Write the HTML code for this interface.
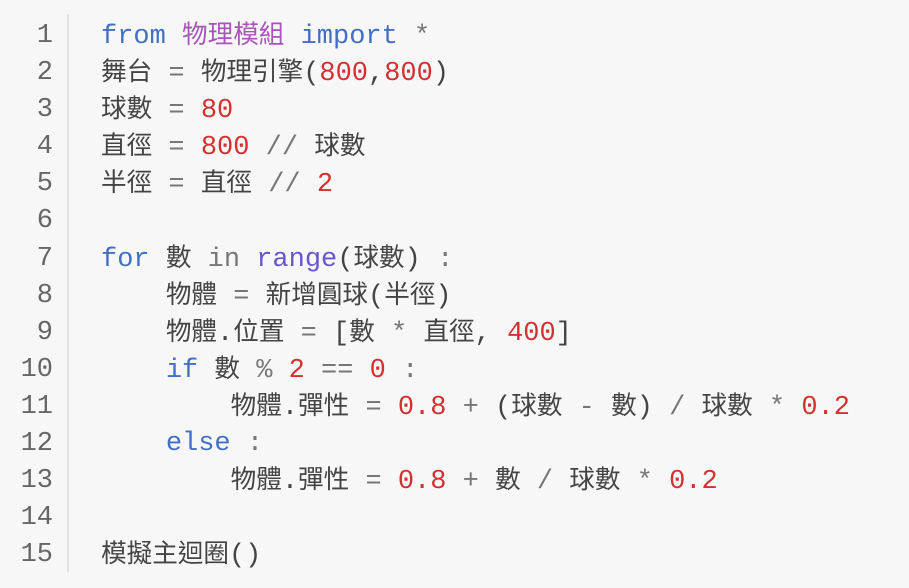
<!DOCTYPE html>
<html><head><meta charset="utf-8"><style>
body{margin:0;width:909px;height:585px;background:#f7f7f7;overflow:hidden;font-family:"Liberation Mono","Noto Sans CJK TC",monospace;font-size:27px;color:#444;}
.g{position:absolute;left:67px;top:14px;width:2px;height:558px;background:#e2e2e2;}
.l{position:absolute;left:0;height:37px;line-height:37px;white-space:pre;}
.n{position:absolute;left:0;width:53px;text-align:right;color:#666;}
.c{position:absolute;left:101px;}
i{font-style:normal;font-size:25.6px;}
.k{color:#4470c4}.m{color:#a855b8}.r{color:#d43030}.o{color:#777}.f{color:#6a55cc}
</style></head><body>
<div class="g"></div>
<div style="position:absolute;left:0;top:3px;width:909px;height:585px">
<div class="l" style="top:15px"><span class="n">1</span><span class="c"><span class="k">from</span> <span class="m"><i>物理模組</i></span> <span class="k">import</span> <span class="o">*</span></span></div>
<div class="l" style="top:52px"><span class="n">2</span><span class="c"><i>舞台</i> <span class="o">=</span> <i>物理引擎</i>(<span class="r">800</span>,<span class="r">800</span>)</span></div>
<div class="l" style="top:89px"><span class="n">3</span><span class="c"><i>球數</i> <span class="o">=</span> <span class="r">80</span></span></div>
<div class="l" style="top:126px"><span class="n">4</span><span class="c"><i>直徑</i> <span class="o">=</span> <span class="r">800</span> <span class="o">//</span> <i>球數</i></span></div>
<div class="l" style="top:163px"><span class="n">5</span><span class="c"><i>半徑</i> <span class="o">=</span> <i>直徑</i> <span class="o">//</span> <span class="r">2</span></span></div>
<div class="l" style="top:200px"><span class="n">6</span></div>
<div class="l" style="top:238px"><span class="n">7</span><span class="c"><span class="k">for</span> <i>數</i> <span class="o">in</span> <span class="f">range</span>(<i>球數</i>) <span class="o">:</span></span></div>
<div class="l" style="top:275px"><span class="n">8</span><span class="c">    <i>物體</i> <span class="o">=</span> <i>新增圓球</i>(<i>半徑</i>)</span></div>
<div class="l" style="top:312px"><span class="n">9</span><span class="c">    <i>物體</i>.<i>位置</i> <span class="o">=</span> [<i>數</i> <span class="o">*</span> <i>直徑</i>, <span class="r">400</span>]</span></div>
<div class="l" style="top:349px"><span class="n">10</span><span class="c">    <span class="k">if</span> <i>數</i> <span class="o">%</span> <span class="r">2</span> <span class="o">==</span> <span class="r">0</span> <span class="o">:</span></span></div>
<div class="l" style="top:386px"><span class="n">11</span><span class="c">        <i>物體</i>.<i>彈性</i> <span class="o">=</span> <span class="r">0.8</span> <span class="o">+</span> (<i>球數</i> <span class="o">-</span> <i>數</i>) <span class="o">/</span> <i>球數</i> <span class="o">*</span> <span class="r">0.2</span></span></div>
<div class="l" style="top:423px"><span class="n">12</span><span class="c">    <span class="k">else</span> <span class="o">:</span></span></div>
<div class="l" style="top:460px"><span class="n">13</span><span class="c">        <i>物體</i>.<i>彈性</i> <span class="o">=</span> <span class="r">0.8</span> <span class="o">+</span> <i>數</i> <span class="o">/</span> <i>球數</i> <span class="o">*</span> <span class="r">0.2</span></span></div>
<div class="l" style="top:497px"><span class="n">14</span></div>
<div class="l" style="top:534px"><span class="n">15</span><span class="c"><i>模擬主迴圈</i>()</span></div>
</div>
</body></html>
